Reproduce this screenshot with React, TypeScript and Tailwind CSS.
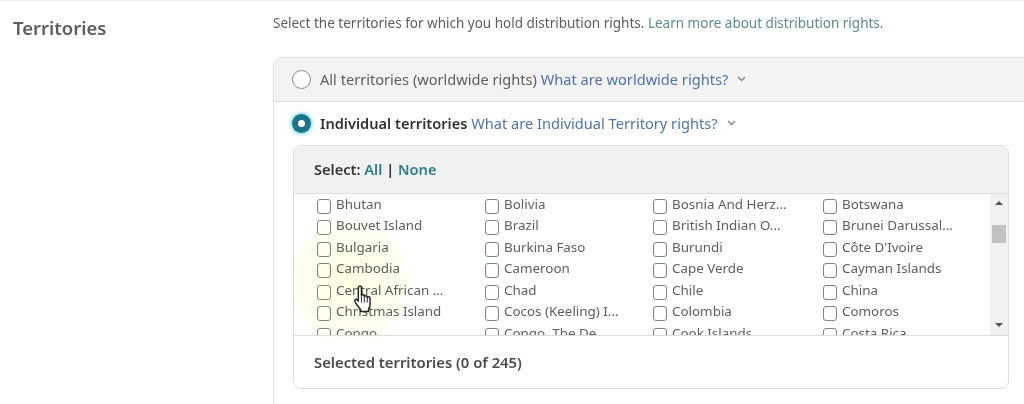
import { ReactNode } from "react";

const territories = [
  ["Bhutan", "Bolivia", "Bosnia And Herz...", "Botswana"],
  ["Bouvet Island", "Brazil", "British Indian O...", "Brunei Darussal..."],
  ["Bulgaria", "Burkina Faso", "Burundi", "Côte D'Ivoire"],
  ["Cambodia", "Cameroon", "Cape Verde", "Cayman Islands"],
  ["Central African ...", "Chad", "Chile", "China"],
  ["Christmas Island", "Cocos (Keeling) I...", "Colombia", "Comoros"],
  ["Congo", "Congo, The De...", "Cook Islands", "Costa Rica"],
];

function Chevron() {
  return (
    <svg width="9" height="6" viewBox="0 0 9 6" className="ml-[9px] mb-[3px] inline-block" fill="none" stroke="#7b8585" strokeWidth="1.3">
      <path d="M1 1 L4.5 4.5 L8 1" />
    </svg>
  );
}

function OptionRow({ className, radio, children }: { className: string; radio: ReactNode; children: ReactNode }) {
  return (
    <div className={`flex items-center pl-[18px] ${className}`}>
      {radio}
      <div className="ml-[9px] whitespace-nowrap text-[14.6px]">{children}</div>
    </div>
  );
}

function Territory({ name }: { name: string }) {
  return (
    <div className="flex h-[21.5px] items-center">
      <span className="mt-[3px] h-[15px] w-[14px] shrink-0 rounded-[3px] border border-[#7f8585] bg-white" />
      <span className="mb-[2px] ml-[5px] whitespace-nowrap text-[13.4px] text-[#5b5f5f]">{name}</span>
    </div>
  );
}

function HandCursor() {
  return (
    <svg width="21" height="29" viewBox="0 0 20 28" className="absolute left-[353px] top-[284px]">
      <path
        d="M5 2.5c0-2 3-2 3 0v8c0-1.6 2.8-1.6 2.8 0v1c0-1.6 2.8-1.6 2.8 0v1c0-1.5 2.7-1.5 2.7.2v6c0 2.5-.8 3.6-1.6 5.2v1.6H7.2v-1.6C5.5 21.5 3.5 19 1.8 16.2c-1.1-1.9 1-3.2 2.2-1.8l1 1.2z"
        fill="#fff"
        stroke="#222"
        strokeWidth="1.4"
        strokeLinejoin="round"
      />
      <path d="M8 11v6M10.8 12v5M13.6 13v4" stroke="#222" strokeWidth="0.9" />
    </svg>
  );
}

export default function App() {
  return (
    <div className="relative flex h-[404px] w-[1024px] overflow-hidden border-t border-[#eeeeee] bg-white font-['Noto_Sans',sans-serif]">
      <div className="w-[273px] shrink-0 pl-[13px] pt-[13px] text-[18.5px] font-semibold text-[#5c5f5f]">Territories</div>

      <div className="flex-1 pt-[13px]">
        <p className="whitespace-nowrap text-[13.5px] leading-[18px] text-[#5a5e5e]">
          Select the territories for which you hold distribution rights.{" "}
          <span className="text-[#5c8c8f]">Learn more about distribution rights.</span>
        </p>

        <div className="mt-[25px] h-[360px] rounded-tl-[8px] border-l border-t border-[#dddddd]">
          <OptionRow
            className="h-[44px] border-b border-[#dddddd] bg-[#f3f3f3]"
            radio={<span className="h-[19px] w-[19px] rounded-full border border-[#8a8f8f] bg-white" />}
          >
            <span className="text-[#5a5e5e]">All territories (worldwide rights) </span>
            <span className="text-[#4f73a8]">What are worldwide rights?</span>
            <Chevron />
          </OptionRow>

          <OptionRow
            className="h-[43px]"
            radio={
              <span className="flex h-[19px] w-[19px] items-center justify-center rounded-full bg-[#1b7488] shadow-[0_0_3px_2px_#a8e6f0]">
                <span className="h-[7px] w-[7px] rounded-full bg-white" />
              </span>
            }
          >
            <span className="font-semibold text-[#2f3333]">Individual territories </span>
            <span className="text-[#4f73a8]">What are Individual Territory rights?</span>
            <Chevron />
          </OptionRow>

          <div className="ml-[19px] w-[716px] overflow-hidden rounded-[8px] border border-[#dddddd]">
            <div className="flex h-[47px] items-center bg-[#f0f2f2] pl-[20px] text-[14.6px] font-semibold text-[#33373a]">
              Select:&nbsp;<span className="text-[#2f7c8e]">All</span>&nbsp;<span className="font-bold">|</span>&nbsp;<span className="text-[#2f7c8e]">None</span>
            </div>

            <div className="flex h-[143px] border-y border-[#dddddd]">
              <div className="h-[141px] flex-1 overflow-hidden pl-[23px]">
                {territories.map((row) => (
                  <div key={row[0]} className="grid grid-cols-[168px_168px_170px_1fr]">
                    {row.map((name) => (
                      <Territory key={name} name={name} />
                    ))}
                  </div>
                ))}
              </div>
              <div className="flex w-[18px] flex-col items-center bg-[#f1f1f1] pt-[7px]">
                <span className="h-0 w-0 border-x-[4px] border-b-[4px] border-x-transparent border-b-[#505050]" />
                <span className="mt-[20px] h-[18px] w-[14px] shrink-0 bg-[#c1c1c1]" />
                <span className="mt-[80px] h-0 w-0 border-x-[4px] border-t-[4px] border-x-transparent border-t-[#505050]" />
              </div>
            </div>

            <div className="flex h-[52px] items-center pl-[20px] text-[14.8px] font-semibold text-[#484c4c]">
              Selected territories (0 of 245)
            </div>
          </div>
        </div>
      </div>

      {/* cursor highlight */}
      <div className="pointer-events-none absolute left-[285px] top-[215px] h-[130px] w-[130px] bg-[radial-gradient(circle,rgba(255,255,210,0.6)_0%,rgba(255,255,220,0.4)_55%,rgba(255,255,255,0)_72%)] mix-blend-multiply" />
      <HandCursor />
    </div>
  );
}
